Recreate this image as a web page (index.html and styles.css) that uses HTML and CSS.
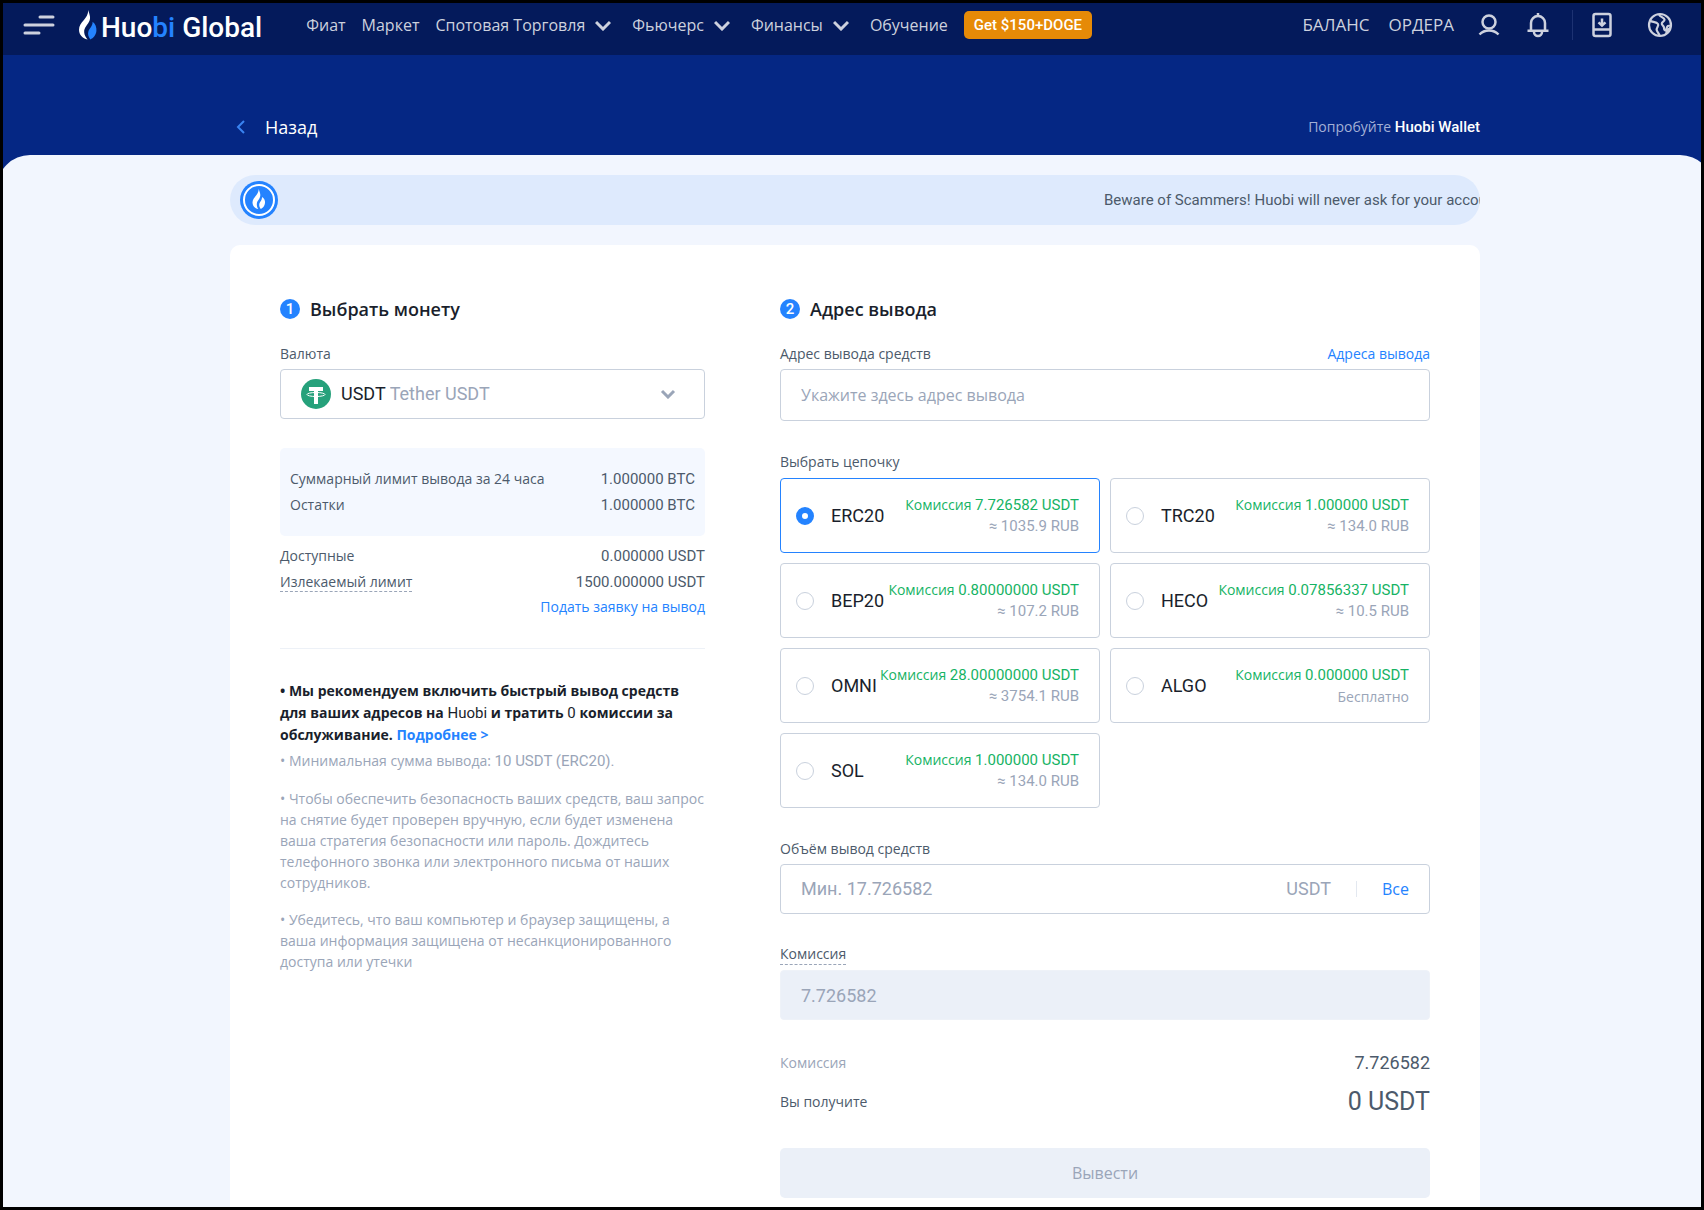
FILE: index.html
```html
<!DOCTYPE html>
<html lang="ru">
<head>
  <meta charset="UTF-8" />
  <meta name="viewport" content="width=device-width, initial-scale=1" />
  <title>Huobi Global</title>
  <link rel="stylesheet" href="styles.css">
</head>
<body>
  <header class="topbar">
    <button class="icon-btn menu-btn" aria-label="Меню">
      <svg width="32" height="22" viewBox="0 0 32 22" fill="none" stroke="currentColor" stroke-width="3" stroke-linecap="round">
        <path d="M17 3h13M2 11h28M2 19h14" />
      </svg>
    </button>
    <a href="#" class="logo">
      <svg width="18" height="30" viewBox="0 0 18 30">
        <path fill="#fff" d="M9.200 0C10.500 4.600 11.800 7 10.600 10.500 9 15 4.800 17 5.200 22.500 5.400 25.500 7 27.500 8.600 29.400 3.500 28.500 0 24.600 0 19.800 0 11.500 9.500 9 9.200 0z" />
        <path fill="#2483ff" d="M13.600 11.700C16.400 13.700 17.800 17.500 17.400 21 17 25 14.500 28.200 11.300 29.400 9.200 26.500 8.500 24 9.500 21 10.500 18 13.800 16 13.600 11.700z" />
      </svg>
      <span class="logo-text">Huo<span class="logo-accent">bi</span> Global</span>
    </a>
    <nav class="main-nav">
      <a href="#">Фиат</a>
      <a href="#">Маркет</a>
      <a href="#" class="has-menu">Спотовая Торговля
        <svg class="chev" width="16" height="11" viewBox="0 0 16 11"><path d="M1 2l7 7 7-7" /></svg>
      </a>
      <a href="#" class="has-menu">Фьючерс
        <svg class="chev" width="16" height="11" viewBox="0 0 16 11"><path d="M1 2l7 7 7-7" /></svg>
      </a>
      <a href="#" class="has-menu">Финансы
        <svg class="chev" width="16" height="11" viewBox="0 0 16 11"><path d="M1 2l7 7 7-7" /></svg>
      </a>
      <a href="#">Обучение</a>
      <a href="#" class="promo">Get $150+DOGE</a>
    </nav>
    <div class="user-nav">
      <a href="#">БАЛАНС</a>
      <a href="#">ОРДЕРА</a>
      <button class="icon-btn" aria-label="Профиль">
        <svg width="22" height="24" viewBox="0 0 22 24" fill="none" stroke="currentColor" stroke-width="2.500">
          <circle cx="11" cy="9" r="6.500" />
          <path d="M1.500 21.500c3-3.200 6-4 9.500-4s6.500.8 9.500 4" />
        </svg>
      </button>
      <button class="icon-btn bell-btn" aria-label="Уведомления">
        <svg width="22" height="26" viewBox="0 0 22 26" fill="none" stroke="currentColor" stroke-width="2.500">
          <path d="M11 1v4M4 18.500V11a7 7 0 0 1 14 0v7.500M.5 18.800h21M7 20a4 4 0 0 0 8 0" />
        </svg>
      </button>
      <span class="divider"></span>
      <button class="icon-btn download-btn" aria-label="Скачать">
        <svg width="20" height="26" viewBox="0 0 20 26" fill="none" stroke="currentColor" stroke-width="2.500">
          <rect x="1.500" y="2" width="17" height="22" rx="2" />
          <path d="M1.500 17.500h17M10 6.500v7M6.500 10.300L10 13.600l3.500-3.300" />
        </svg>
      </button>
      <button class="icon-btn globe-btn" aria-label="Язык">
        <svg width="26" height="26" viewBox="0 0 26 26" fill="none" stroke="currentColor" stroke-width="2.200" stroke-linejoin="round">
          <circle cx="13" cy="13" r="11" />
          <path d="M3 8.800c2.500 1.400 6.500 1 8 3.200 1.200 2-1.800 3.500-1.300 6 .4 1.800 2 3 3 5.500M12 2.500c.8 2.500 5 2.800 5.500 5 .4 2-3 2.300-2.700 4.300.2 1.500 2.200 2 2.200 4 0 1.500.5 3 1.700 2.400 1.500-.8.500-3 2-4.200l3-.5" />
          <path fill="currentColor" stroke="none" d="M18 22c1-2 0-3.500 1.500-5l4-2.500c-.5 3.500-2.500 6-5.500 7.500z" />
        </svg>
      </button>
    </div>
  </header>

  <div class="hero">
    <div class="subhead">
      <a href="#" class="back">
        <svg width="10" height="14" viewBox="0 0 10 14" fill="none" stroke="#3a83f0" stroke-width="2"><path d="M8 1L2 7l6 6" /></svg>
        Назад
      </a>
      <p class="try-wallet">Попробуйте <a href="#">Huobi Wallet</a></p>
    </div>
  </div>

  <main class="page">
    <div class="container">
      <div class="notice">
        <svg width="38" height="38" viewBox="0 0 38 38">
          <circle cx="19" cy="19" r="19" fill="#2483ff" />
          <circle cx="19" cy="19" r="15" fill="none" stroke="#fff" stroke-width="2" />
          <path fill="#fff" d="M18.700 8C20 12 20.800 13.500 20 16c-.9 3-3.400 4-3.200 7.500.1 2 .7 3.500 1.500 4.500C14.800 27.300 12.500 25 12.500 21.500c0-5 6.200-7.500 6.200-13.500zM22 16c2.300 1.500 3.300 3.500 3 6-.3 3-2 5-4.200 6-1.500-2-1.900-3.800-1.300-5.800C20.200 20.200 22.200 19 22 16z" />
        </svg>
        <p class="notice-text">Beware of Scammers! Huobi will never ask for your account</p>
      </div>

      <form class="card">
        <section class="coin-col">
          <h2 class="step-title"><span class="step-num">1</span>Выбрать монету</h2>
          <div class="label-row"><label for="coin">Валюта</label></div>
          <div class="field coin-field">
            <svg width="30" height="30" viewBox="0 0 30 30">
              <circle cx="15" cy="15" r="15" fill="#26a17b" />
              <path fill="#fff" d="M8 8h14v4h-5v13h-4V12H8z" />
              <ellipse cx="15" cy="15.500" rx="9" ry="2" fill="none" stroke="#fff" />
            </svg>
            <span class="coin-code">USDT</span>
            <select id="coin"><option>Tether USDT</option></select>
            <svg class="field-chev" width="16" height="10" viewBox="0 0 16 10"><path d="M2 2l6 6 6-6" /></svg>
          </div>

          <dl class="limits">
            <div class="row"><dt>Суммарный лимит вывода за 24 часа</dt><dd>1.000000 BTC</dd></div>
            <div class="row"><dt>Остатки</dt><dd>1.000000 BTC</dd></div>
          </dl>
          <dl class="balances">
            <div class="row"><dt>Доступные</dt><dd>0.000000 USDT</dd></div>
            <div class="row"><dt><span class="hint">Излекаемый лимит</span></dt><dd>1500.000000 USDT</dd></div>
          </dl>
          <a href="#" class="request-link">Подать заявку на вывод</a>

          <div class="tips">
            <p class="tip-strong">• Мы рекомендуем включить быстрый вывод средств для ваших адресов на <span class="latin">Huobi</span> и тратить <span class="latin">0</span> комиссии за обслуживание. <a href="#">Подробнее &gt;</a></p>
            <p>• Минимальная сумма вывода: <span class="latin">10 USDT (ERC20).</span></p>
            <p>• Чтобы обеспечить безопасность ваших средств, ваш запрос на снятие будет проверен вручную, если будет изменена ваша стратегия безопасности или пароль. Дождитесь телефонного звонка или электронного письма от наших сотрудников.</p>
            <p>• Убедитесь, что ваш компьютер и браузер защищены, а ваша информация защищена от несанкционированного доступа или утечки</p>
          </div>
        </section>

        <section class="address-col">
          <h2 class="step-title"><span class="step-num">2</span>Адрес вывода</h2>
          <div class="label-row">
            <label for="address">Адрес вывода средств</label>
            <a href="#">Адреса вывода</a>
          </div>
          <input class="field address-input" id="address" type="text" placeholder="Укажите здесь адрес вывода">

          <fieldset class="chains">
            <legend>Выбрать цепочку</legend>
            <div class="chain-grid">
              <label class="chain">
                <input type="radio" name="chain" checked>
                <span class="chain-name">ERC20</span>
                <span class="chain-fee"><span class="fee">Комиссия <span class="latin">7.726582 USDT</span></span><span class="latin">≈ 1035.9 RUB</span></span>
              </label>
              <label class="chain">
                <input type="radio" name="chain">
                <span class="chain-name">TRC20</span>
                <span class="chain-fee"><span class="fee">Комиссия <span class="latin">1.000000 USDT</span></span><span class="latin">≈ 134.0 RUB</span></span>
              </label>
              <label class="chain">
                <input type="radio" name="chain">
                <span class="chain-name">BEP20</span>
                <span class="chain-fee"><span class="fee">Комиссия <span class="latin">0.80000000 USDT</span></span><span class="latin">≈ 107.2 RUB</span></span>
              </label>
              <label class="chain">
                <input type="radio" name="chain">
                <span class="chain-name">HECO</span>
                <span class="chain-fee"><span class="fee">Комиссия <span class="latin">0.07856337 USDT</span></span><span class="latin">≈ 10.5 RUB</span></span>
              </label>
              <label class="chain">
                <input type="radio" name="chain">
                <span class="chain-name">OMNI</span>
                <span class="chain-fee"><span class="fee">Комиссия <span class="latin">28.00000000 USDT</span></span><span class="latin">≈ 3754.1 RUB</span></span>
              </label>
              <label class="chain">
                <input type="radio" name="chain">
                <span class="chain-name">ALGO</span>
                <span class="chain-fee"><span class="fee">Комиссия <span class="latin">0.000000 USDT</span></span><span>Бесплатно</span></span>
              </label>
              <label class="chain">
                <input type="radio" name="chain">
                <span class="chain-name">SOL</span>
                <span class="chain-fee"><span class="fee">Комиссия <span class="latin">1.000000 USDT</span></span><span class="latin">≈ 134.0 RUB</span></span>
              </label>
            </div>
          </fieldset>

          <div class="label-row"><label for="amount">Объём вывод средств</label></div>
          <div class="field amount-field">
            <input id="amount" type="text" placeholder="Мин. 17.726582">
            <span class="unit">USDT</span>
            <button type="button" class="all-btn">Все</button>
          </div>

          <div class="label-row fee-label"><label for="fee" class="hint">Комиссия</label></div>
          <input class="field fee-input" id="fee" type="text" value="7.726582" disabled>

          <dl class="summary">
            <div class="row"><dt class="muted">Комиссия</dt><dd>7.726582</dd></div>
            <div class="row"><dt>Вы получите</dt><dd class="total">0 USDT</dd></div>
          </dl>
          <button type="submit" class="submit-btn" disabled>Вывести</button>
        </section>
      </form>
    </div>
  </main>
</body>
</html>
```
FILE: styles.css
```css
:root {
  --nav-bg: #041a5b;
  --head-bg: #052784;
  --page-bg: #f2f6fe;
  --blue: #2483ff;
  --green: #16b364;
  --text: #1a1f2c;
  --text-mid: #4c5a6b;
  --text-muted: #9aa5b8;
  --border: #c9d1dd;
  --disabled: #ebf0f8;
  --cyr: 'Open Sans', 'Noto Sans', sans-serif;
  --latin: Roboto, 'Open Sans', sans-serif;
}

* {
  margin: 0;
  padding: 0;
  box-sizing: border-box;
}

body {
  display: flex;
  flex-direction: column;
  min-height: 100vh;
  border: 3px solid #000;
  background: var(--head-bg);
  font-family: var(--cyr);
  font-size: 14px;
  line-height: 20px;
  color: var(--text-mid);
  overflow-x: hidden;
}

a {
  color: var(--blue);
  text-decoration: none;
}

button,
input,
select {
  font: inherit;
  color: inherit;
  border: 0;
  background: none;
}

.latin {
  font-family: var(--latin);
  font-size: 15px;
  font-weight: 400;
}

/* Top bar */
.topbar {
  display: flex;
  align-items: center;
  height: 52px;
  padding: 0 28px 8px 20px;
  background: var(--nav-bg);
  color: #cdd1de;
  font-size: 16px;
}

.topbar a {
  color: inherit;
}

.icon-btn {
  display: flex;
  color: inherit;
  cursor: pointer;
}

.logo {
  display: flex;
  align-items: center;
  gap: 4px;
  margin-left: 24px;
}

.logo-text {
  padding-top: 5px;
  font-family: var(--latin);
  font-size: 28px;
  font-weight: 500;
  line-height: 30px;
  color: #fff;
}

.logo-accent {
  color: var(--blue);
}

.main-nav {
  display: flex;
  align-items: center;
  gap: 16px;
  margin-left: 44px;
}

.has-menu {
  display: flex;
  align-items: center;
  gap: 10px;
  margin-right: 5px;
}

.chev,
.field-chev {
  fill: none;
  stroke: currentColor;
  stroke-width: 3;
}

.main-nav .promo {
  padding: 0 10px;
  border-radius: 5px;
  background: #e68a07;
  color: #fff;
  font-family: var(--latin);
  font-size: 15px;
  font-weight: 500;
  line-height: 28px;
}

.user-nav {
  display: flex;
  align-items: center;
  gap: 19px;
  margin-left: auto;
  font-size: 17px;
}

.user-nav .icon-btn {
  margin-left: 5px;
}

.user-nav .bell-btn {
  margin-left: 8px;
}

.divider {
  width: 1px;
  height: 30px;
  margin-left: 4px;
  background: #1d3272;
}

.user-nav .download-btn {
  margin-left: 0;
}

.user-nav .globe-btn {
  margin-left: 16px;
}

/* Back row */
.hero {
  margin: 0 -12px 0 -6px;
  padding: 0 20px;
}

.subhead {
  display: flex;
  align-items: center;
  justify-content: space-between;
  max-width: 1250px;
  height: 100px;
  margin: 0 auto;
  padding: 44px 0 0 6px;
  color: #a3b0d6;
}

.subhead a {
  color: #fff;
}

.back {
  display: flex;
  align-items: center;
  gap: 19px;
  font-size: 18px;
}

.try-wallet a {
  font-family: var(--latin);
  font-size: 15px;
  font-weight: 500;
}

/* Page */
.page {
  display: flex;
  flex: 1;
  justify-content: center;
  margin: 0 -12px 0 -6px;
  padding: 20px 20px 0;
  border-radius: 33px 33px 0 0;
  background: var(--page-bg);
}

.container {
  display: flex;
  flex: 1;
  flex-direction: column;
  gap: 20px;
  max-width: 1250px;
}

.notice {
  display: flex;
  align-items: center;
  justify-content: space-between;
  height: 50px;
  padding-left: 10px;
  border-radius: 25px;
  background: #deeafd;
  overflow: hidden;
}

.notice-text {
  width: 376px;
  font-family: var(--latin);
  font-size: 15px;
  white-space: nowrap;
}

.card {
  display: grid;
  flex: 1;
  grid-template-columns: 425fr 650fr;
  gap: 75px;
  padding: 50px 50px 9px;
  border-radius: 10px 10px 0 0;
  background: #fff;
}

.step-title {
  display: flex;
  align-items: center;
  gap: 10px;
  margin-bottom: 20px;
  font-size: 18px;
  font-weight: 600;
  line-height: 28px;
  color: var(--text);
}

.step-num {
  width: 20px;
  border-radius: 10px;
  background: var(--blue);
  color: #fff;
  font-family: var(--latin);
  font-size: 15px;
  font-weight: 500;
  line-height: 20px;
  text-align: center;
}

.label-row {
  display: flex;
  justify-content: space-between;
  align-items: flex-start;
  height: 26px;
  line-height: 22px;
}

.field {
  display: flex;
  align-items: center;
  width: 100%;
  height: 50px;
  padding: 0 20px;
  border: 1px solid var(--border);
  border-radius: 4px;
  font-size: 16px;
}

.field ::placeholder,
.field::placeholder {
  color: var(--text-muted);
  opacity: 1;
}

.coin-code,
.coin-field select {
  font-family: var(--latin);
  font-size: 18px;
}

.coin-code {
  margin: 0 4px 0 10px;
  color: var(--text);
}

.coin-field select {
  flex: 1;
  appearance: none;
  color: var(--text-muted);
}

.field-chev {
  margin-right: 8px;
  color: var(--text-muted);
}

.row {
  display: flex;
  align-items: center;
  justify-content: space-between;
  line-height: 26px;
}

.row dd {
  font-family: var(--latin);
  font-size: 15px;
}

.limits {
  margin: 29px 0 7px;
  padding: 18px 10px;
  border-radius: 5px;
  background: #f4f8ff;
}

.hint {
  border-bottom: 1px dashed var(--text-muted);
}

.label-row .hint {
  line-height: 20px;
}

.request-link {
  display: block;
  line-height: 24px;
  text-align: right;
}

.tips {
  margin-top: 29px;
  padding-top: 31px;
  border-top: 1px solid #edf1f7;
  line-height: 21px;
  color: var(--text-muted);
}

.tips p {
  margin-bottom: 16px;
}

.tips .tip-strong {
  margin-bottom: 4px;
  font-weight: 700;
  line-height: 22px;
  color: var(--text);
}

/* Withdrawal address */
.address-input {
  height: 52px;
}

.chains {
  margin: 31px 0 30px;
  border: 0;
}

.chains legend {
  margin-bottom: 6px;
}

.chain-grid {
  display: grid;
  grid-template-columns: 1fr 1fr;
  gap: 10px;
}

.chain {
  display: flex;
  align-items: center;
  height: 75px;
  padding: 0 20px 0 15px;
  border: 1px solid var(--border);
  border-radius: 4px;
  cursor: pointer;
}

.chain:has(input:checked) {
  border-color: var(--blue);
}

.chain input {
  width: 18px;
  height: 18px;
  border: 1px solid var(--border);
  border-radius: 50%;
  appearance: none;
}

.chain input:checked {
  border: 6px solid var(--blue);
}

.chain-name {
  margin-left: 17px;
  color: var(--text);
  font-family: var(--latin);
  font-size: 18px;
}

.chain-fee {
  display: flex;
  flex-direction: column;
  flex: 1;
  align-items: flex-end;
  line-height: 21px;
  color: var(--text-muted);
  white-space: nowrap;
}

.fee {
  color: var(--green);
}

.amount-field input {
  flex: 1;
  font-family: var(--latin);
  font-size: 18px;
}

.unit {
  color: var(--text-muted);
  font-family: var(--latin);
  font-size: 18px;
}

.all-btn {
  margin-left: 25px;
  padding-left: 25px;
  border-left: 1px solid #e3e8f0;
  color: var(--blue);
  line-height: 16px;
  cursor: pointer;
}

.fee-label {
  margin-top: 30px;
}

.fee-input {
  border-color: #eef2f8;
  background: var(--disabled);
  color: var(--text-muted);
  font-family: var(--latin);
  font-size: 18px;
}

.summary {
  margin: 23px 0 27px;
}

.summary .row {
  line-height: 39px;
}

.summary dd {
  font-size: 18px;
}

.summary .total {
  font-size: 25px;
}

.muted {
  color: var(--text-muted);
}

.submit-btn {
  width: 100%;
  height: 50px;
  border-radius: 5px;
  background: var(--disabled);
  color: var(--text-muted);
  font-size: 16px;
}

@media (max-width: 900px) {
  .card {
    grid-template-columns: 1fr;
  }
}
```
